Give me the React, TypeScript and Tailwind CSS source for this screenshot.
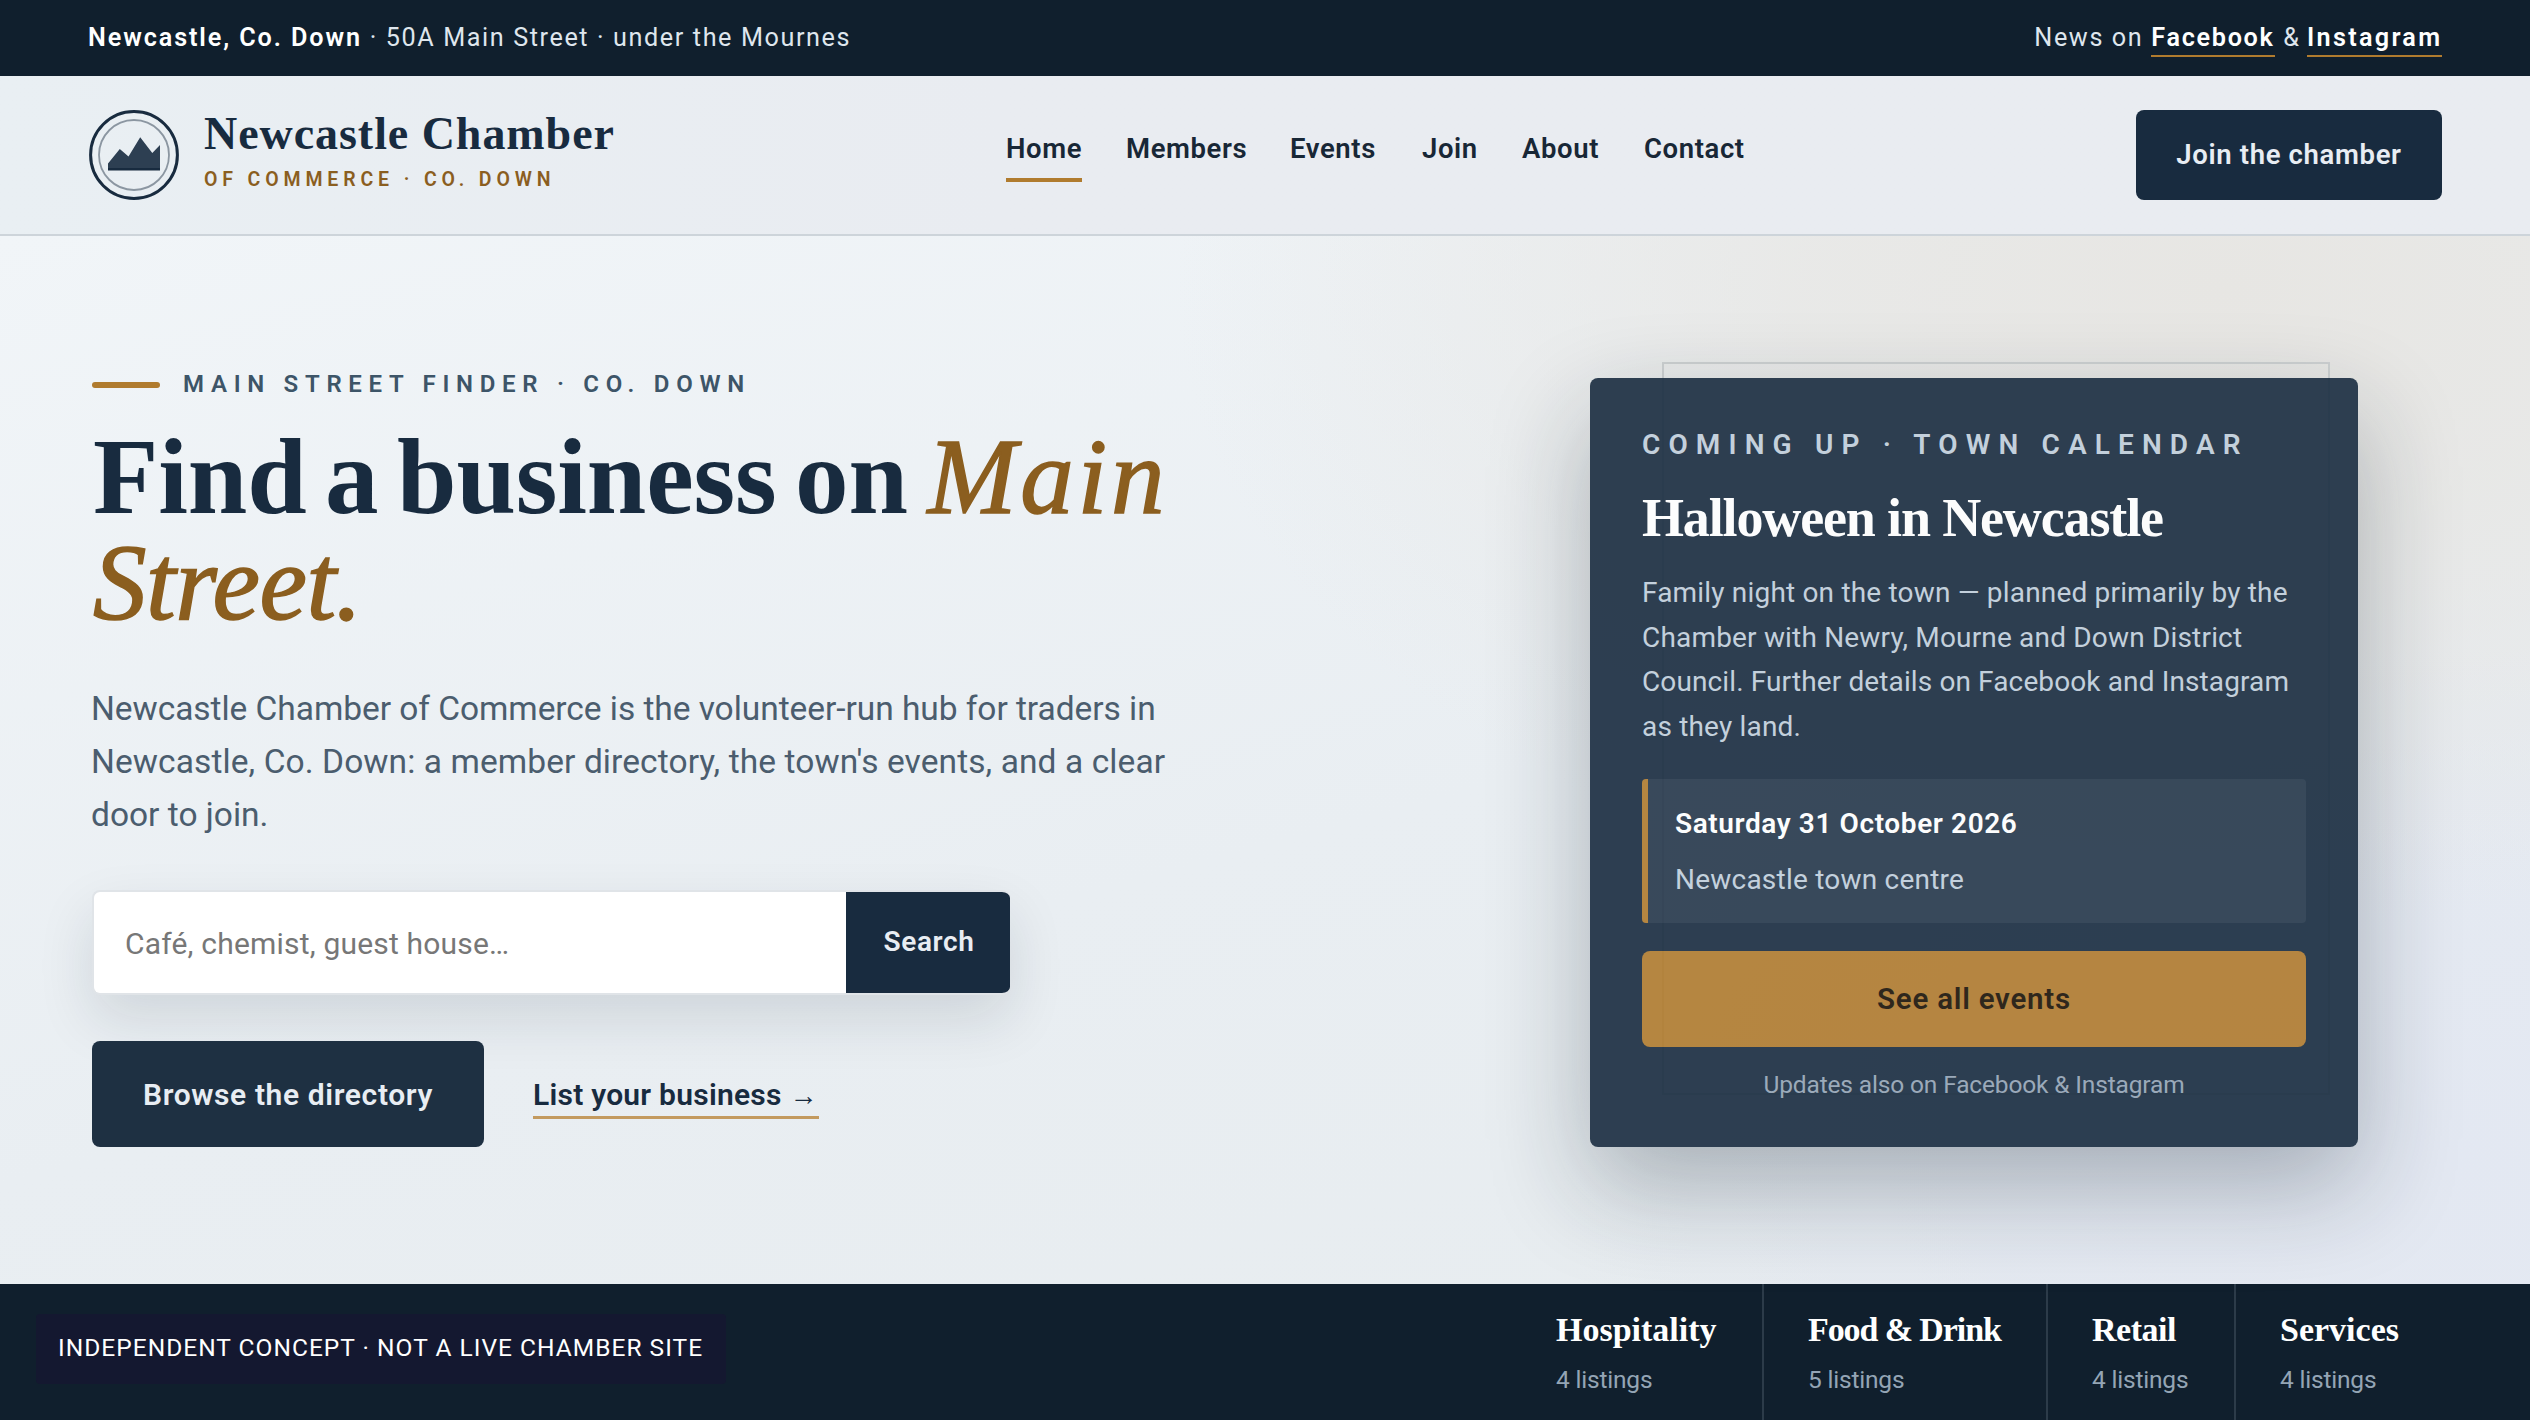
const navItems = [
  { label: "Home", className: "w-[76px] border-[#b07b2e]" },
  { label: "Members", className: "w-[120px] border-transparent" },
  { label: "Events", className: "w-[88px] border-transparent" },
  { label: "Join", className: "w-[56px] border-transparent" },
  { label: "About", className: "w-[78px] border-transparent" },
  { label: "Contact", className: "w-[100px] border-transparent" },
];

const categories = [
  { name: "Hospitality", count: 4, className: "w-[252px] border-r-2" },
  { name: "Food & Drink", count: 5, className: "w-[284px] border-r-2 tracking-[-1.09px]" },
  { name: "Retail", count: 4, className: "w-[188px] border-r-2 tracking-[-0.48px]" },
  { name: "Services", count: 4, className: "w-[206px]" },
];

const LogoMark = () => (
  <svg viewBox="0 0 92 92" className="h-[92px] w-[92px] shrink-0" fill="none">
    <circle cx="46" cy="46" r="43.4" stroke="#182b3f" strokeWidth="3" />
    <circle cx="46" cy="46" r="35" stroke="#182b3f" strokeOpacity="0.45" strokeWidth="1.8" />
    <path d="M20 54.5 L31.8 40 L40.5 47.5 L52.2 28.3 L64.3 44 L72 36 V61 H20 Z" fill="#2d3f52" />
    <path d="M20 60.2 H72" stroke="#182b3f" strokeWidth="2.6" />
  </svg>
);

const TopBar = () => (
  <div className="flex h-[76px] items-center justify-between bg-[#101f2d] px-[88px] text-[25.2px] text-[#dfe6ed]">
    <p className="whitespace-pre tracking-[1.6px]">
      <strong className="font-semibold tracking-[1.9px] text-white">Newcastle, Co. Down</strong>
      <span> · 50A Main Street · under the Mournes</span>
    </p>
    <p className="flex gap-[8px] pt-[4px] leading-[30px]">
      <span className="tracking-[1.6px]">News on</span>
      <a className="h-[34px] w-[124px] border-b-2 border-[#b07b2e] font-semibold tracking-[1.7px] text-white">Facebook</a>
      <span>&amp;</span>
      <a className="h-[34px] w-[135px] border-b-2 border-[#b07b2e] font-semibold tracking-[2.3px] text-white">Instagram</a>
    </p>
  </div>
);

const Header = () => (
  <header className="flex h-[160px] items-center border-b-2 border-[#cdd4da] bg-linear-to-r from-[#e9eff3] to-[#e9ecf1] to-40% px-[88px]">
    <div className="flex w-[918px] items-center gap-[24px]">
      <LogoMark />
      <div className="pb-[8px]">
        <p className="font-['Liberation_Serif',serif] text-[46px] leading-[46px] font-bold tracking-[0.95px] text-[#182b3f]">
          Newcastle Chamber
        </p>
        <p className="mt-[11px] text-[19.5px] leading-[24px] font-semibold tracking-[4.86px] text-[#8b5e1f]">
          OF COMMERCE · CO. DOWN
        </p>
      </div>
    </div>
    <nav className="mt-[2px] flex gap-[44px]">
      {navItems.map((item) => (
        <a
          key={item.label}
          className={`h-[52px] border-b-4 text-[27.5px] leading-[38px] font-semibold tracking-[0.6px] text-[#182736] ${item.className}`}
        >
          {item.label}
        </a>
      ))}
    </nav>
    <button className="ml-auto h-[90px] w-[306px] rounded-[8px] bg-[#182b3f] text-[27.5px] font-semibold tracking-[0.65px] text-[#e8edf3]">
      Join the chamber
    </button>
  </header>
);

const EventCard = () => (
  <div className="relative mt-[142px] mr-[172px] h-[768.5px] w-[768px] shrink-0">
    {/* Offset frame behind the card */}
    <div className="absolute top-[-16px] left-[72px] h-[733px] w-[668px] border-2 border-[#cdd0d1]" />
    <div className="relative h-full rounded-[8px] bg-[#192c40] px-[52px] pt-[50px] whitespace-nowrap opacity-90 shadow-[0_40px_100px_rgba(17,31,42,0.32)]">
      <p className="text-[28px] leading-[34px] font-semibold tracking-[8.13px] text-[#c0cedb]">COMING UP · TOWN CALENDAR</p>
      <h2 className="mt-[26px] font-['Liberation_Serif',serif] text-[54px] leading-[60px] font-bold tracking-[-1.14px] text-white">
        Halloween in Newcastle
      </h2>
      <p className="mt-[23px] text-[28px] leading-[44.7px] tracking-[0.18px] text-[#c0cedb]">
        Family night on the town — planned primarily by the
        <br />
        Chamber with Newry, Mourne and Down District
        <br />
        <span className="tracking-[0.12px]">Council. Further details on Facebook and Instagram</span>
        <br />
        as they land.
      </p>
      <div className="mt-[29px] h-[144px] rounded-[4px] border-l-[6px] border-[#b07b2e] bg-white/6 pt-[25px] pl-[27px] text-[28px] leading-[40px]">
        <p className="font-semibold tracking-[0.6px] text-white">Saturday 31 October 2026</p>
        <p className="mt-[16px] tracking-[0.22px] text-[#c0cedb]">Newcastle town centre</p>
      </div>
      <button className="mt-[28px] h-[96px] w-full rounded-[8px] bg-[#b07b2e] text-[29.5px] font-semibold tracking-[0.75px] text-[#1b1206]">
        See all events
      </button>
      <p className="mt-[22px] text-center text-[24.5px] leading-[32px] tracking-[-0.15px] text-[#93a3b4]">
        Updates also on Facebook &amp; Instagram
      </p>
    </div>
  </div>
);

const Hero = () => (
  <section className="flex h-[1048px] justify-between bg-[radial-gradient(ellipse_1050px_640px_at_88%_5%,#e7e6e3_0%,rgba(231,230,227,0.75)_40%,transparent_100%),radial-gradient(ellipse_900px_600px_at_97%_88%,#e3e8f2_0%,rgba(227,232,242,0.75)_45%,transparent_100%),linear-gradient(165deg,#f1f5f8_0%,#e9eef2_55%,#e7ecef_100%)]">
    <div className="pt-[134px] pl-[92px] whitespace-nowrap">
      <div className="flex h-[30px] items-center gap-[23px]">
        <span className="h-[6px] w-[68px] rounded-full bg-[#b07b2e]" />
        <span className="pb-[2px] text-[24px] leading-[28px] font-semibold tracking-[6.7px] text-[#3d5568]">
          MAIN STREET FINDER · CO. DOWN
        </span>
      </div>
      <h1 className="mt-[24px] pl-px font-['Liberation_Serif',serif] text-[107px] leading-[106px] font-bold tracking-[-0.15px] text-[#182b3f] [word-spacing:-8px]">
        Find a business on{" "}
        <em className="ml-px font-normal tracking-[3.7px] text-[#8b5e1f] [-webkit-text-stroke:1.5px_#8b5e1f]">Main</em>
        <br />
        <em className="font-normal tracking-[-0.5px] text-[#8b5e1f] [-webkit-text-stroke:1.5px_#8b5e1f]">Street.</em>
      </h1>
      <p className="mt-[46px] -ml-px text-[33.5px] leading-[53px] text-[#4b5d6e]">
        <span className="tracking-[-0.05px]">Newcastle Chamber of Commerce is the volunteer-run hub for traders in</span>
        <br />
        <span className="tracking-[0.09px]">Newcastle, Co. Down: a member directory, the town's events, and a clear</span>
        <br />
        door to join.
      </p>
      <form className="mt-[49px] flex h-[105px] w-[918px] overflow-hidden rounded-[8px] border-2 border-r-0 border-[#e0e4e8] bg-white shadow-[0_24px_56px_rgba(17,31,46,0.12)]">
        <input
          className="flex-1 pt-[2px] pl-[31px] text-[30px] tracking-[0.19px] outline-none placeholder:text-[#777777]"
          placeholder="Café, chemist, guest house…"
        />
        <button className="w-[164px] bg-[#182b3f] pb-[2px] pl-[2px] text-[28px] font-semibold tracking-[0.6px] text-[#e8edf3]">Search</button>
      </form>
      <div className="mt-[46px] flex gap-[49px]">
        <button className="h-[106px] w-[392px] rounded-[8px] bg-[#1e3042] pt-px text-[30px] font-semibold tracking-[0.62px] text-[#e8edf3]">
          Browse the directory
        </button>
        <a className="mt-[36px] h-[42px] w-[286px] border-b-3 border-[#c39a5f] text-[30px] leading-[36px] font-semibold tracking-[0.25px] text-[#182b3f]">
          List your business{" "}
          <span className="font-['Liberation_Sans',sans-serif] text-[28px] leading-none font-normal">→</span>
        </a>
      </div>
    </div>
    <EventCard />
  </section>
);

const Footer = () => (
  <footer className="flex h-[136px] justify-between bg-[#101f2d] pr-[88px] pl-[36px]">
    <p className="mt-[30px] h-[70px] w-[690px] rounded-[4px] bg-[#141830] pl-[22px] text-[24.5px] leading-[67px] tracking-[1.02px] whitespace-nowrap text-white">
      INDEPENDENT CONCEPT · NOT A LIVE CHAMBER SITE
    </p>
    <div className="flex">
      {categories.map((category) => (
        <div key={category.name} className={`border-[#2c3b49] pt-[26px] pl-[44px] whitespace-nowrap ${category.className}`}>
          <p className="font-['Liberation_Serif',serif] text-[34px] leading-[40px] font-bold text-white">{category.name}</p>
          <p className="mt-[14px] text-[24.5px] leading-[32px] tracking-[-0.2px] text-[#94a5b5]">{category.count} listings</p>
        </div>
      ))}
    </div>
  </footer>
);

const App = () => {
  return (
    <div className="h-[1420px] w-[2530px] overflow-hidden font-['Roboto',sans-serif]">
      <TopBar />
      <Header />
      <Hero />
      <Footer />
    </div>
  );
};

export default App;
